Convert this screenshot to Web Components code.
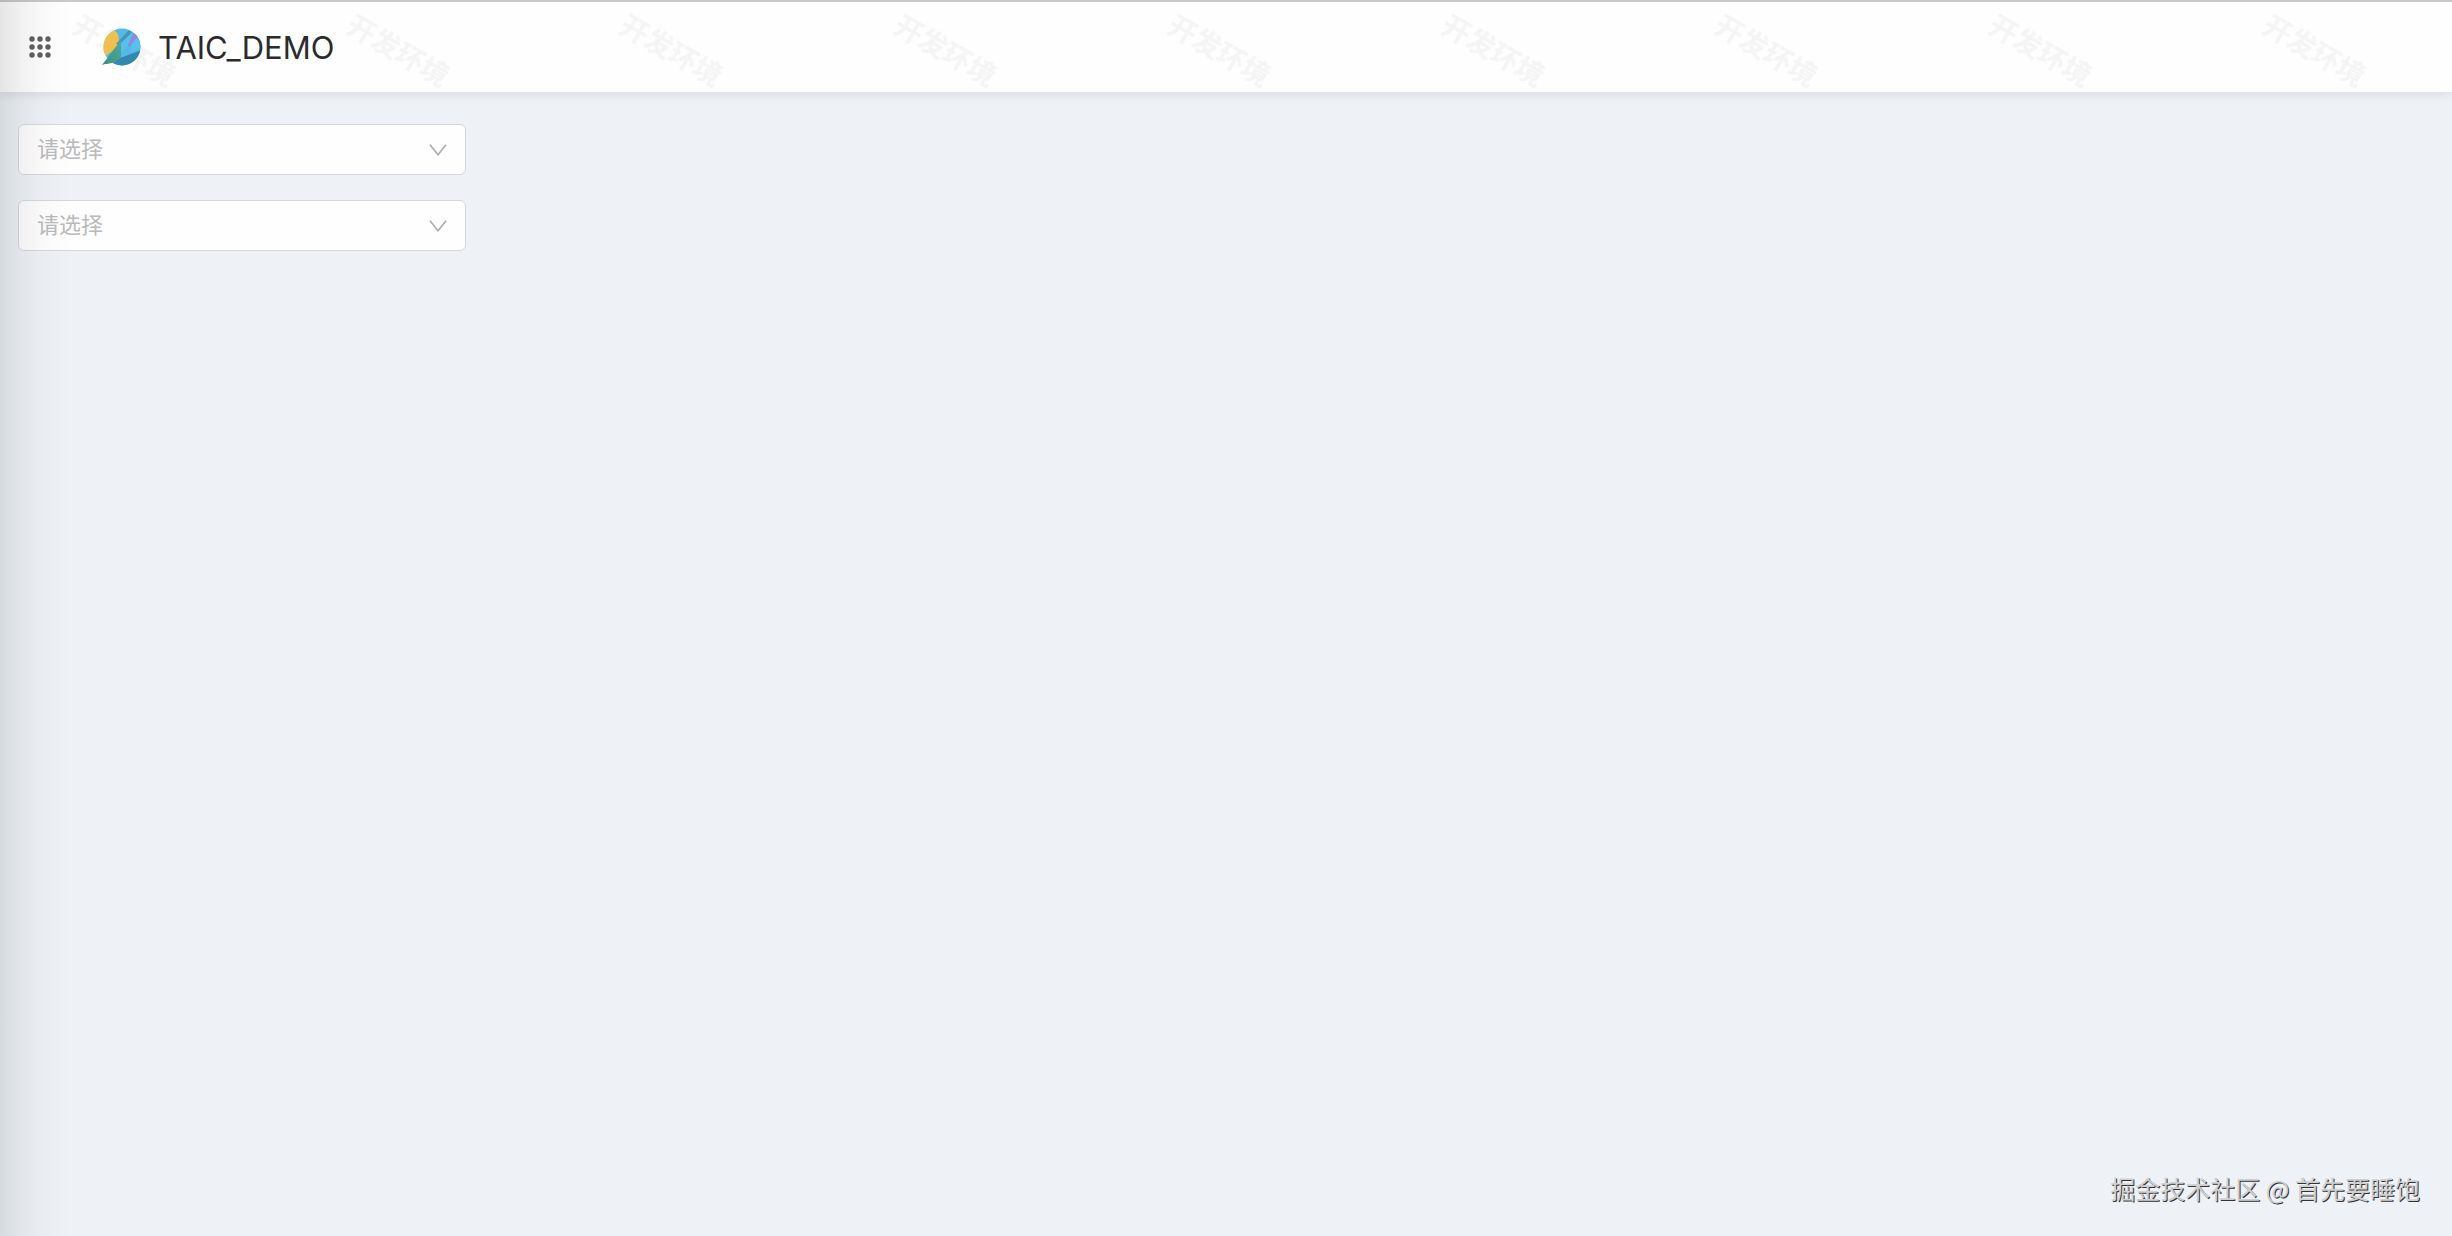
<!DOCTYPE html>
<html lang="zh-CN">
<head>
<meta charset="utf-8">
<title>TAIC_DEMO</title>
<style>
 body {
  margin: 0;
  background: #eef2f7;
  font-family: Inter, 'Noto Sans CJK SC', sans-serif;
 }
</style>
</head>
<body>
<app-shell>
 <app-header slot="header" title-text="TAIC_DEMO" watermark="开发环境"></app-header>
 <app-select label="选项一" placeholder="请选择"></app-select>
 <app-select label="选项二" placeholder="请选择"></app-select>
 <page-credit slot="footer">掘金技术社区 @ 首先要睡饱</page-credit>
</app-shell>

<script>
class AppShell extends HTMLElement {
 constructor() {
  super();
  this.attachShadow({ mode: 'open' });
 }

 connectedCallback() {
  this.shadowRoot.innerHTML = `
   <style>
   :host {
    display: flex;
    flex-direction: column;
    min-height: 100vh;
    position: relative;
   }

   main {
    flex: 1;
    display: flex;
    flex-direction: column;
    align-items: flex-start;
    gap: 25px;
    padding: 32px 18px;
   }

   /* soft shade along the left edge, above everything */
   .edge {
    position: absolute;
    inset: 0 auto 0 0;
    width: 72px;
    pointer-events: none;
    background: linear-gradient(to right, rgba(0, 10, 0, 0.1), rgba(0, 10, 0, 0.05) 30%, rgba(0, 10, 0, 0.02) 60%, transparent);
   }
   </style>
   <slot name="header"></slot>
   <main><slot></slot></main>
   <slot name="footer"></slot>
   <div class="edge"></div>
  `;
 }
}

class AppHeader extends HTMLElement {
 constructor() {
  super();
  this.attachShadow({ mode: 'open' });
 }

 connectedCallback() {
  this.render();
 }

 getDots() {
  let dots = '';
  for (let y = 0; y < 3; y++) {
   for (let x = 0; x < 3; x++) {
    dots += `<circle cx="${3 + x * 8}" cy="${3 + y * 8}" r="2.7"/>`;
   }
  }
  return dots;
 }

 render() {
  const mark = this.getAttribute('watermark') || '';

  this.shadowRoot.innerHTML = `
   <style>
   :host {
    display: block;
    position: relative;
    border-top: 2px solid #c9c9c9;
    background: #fefefe;
    box-shadow: 0 2px 10px rgba(0, 0, 0, 0.1);
   }

   header {
    position: relative;
    display: flex;
    align-items: center;
    height: 90px;
    padding: 0 29px;
   }

   button {
    display: flex;
    padding: 0;
    border: 0;
    background: none;
    color: #606060;
    cursor: pointer;
   }

   .logo {
    margin-left: 50px;
   }

   h1 {
    margin: 0 0 0 16px;
    padding-top: 2px;
    font-size: 31px;
    font-weight: 400;
    line-height: 40px;
    color: #2b2b2b;
   }

   /* tiled marks behind the bar content */
   .marks {
    position: absolute;
    inset: 0;
    display: flex;
    align-items: center;
    justify-content: space-between;
    padding: 4px 81px 0 69px;
   }

   .marks span {
    font: 700 28px/28px 'Noto Sans CJK SC', sans-serif;
    white-space: nowrap;
    color: #f5f5f5;
    transform: rotate(30deg);
    user-select: none;
   }
   </style>
   <div class="marks" aria-hidden="true">${`<span>${mark}</span>`.repeat(9)}</div>
   <header>
    <button type="button" aria-label="应用">
     <svg width="22" height="22" viewBox="0 0 22 22" fill="currentColor">${this.getDots()}</svg>
    </button>
    <svg class="logo" width="41" height="38" viewBox="0 0 41 38">
     <defs>
      <clipPath id="disc"><circle cx="21" cy="19" r="18.5"/></clipPath>
      <linearGradient id="sun" x1="0" y1="0" x2="1" y2="1">
       <stop offset="0" stop-color="#eec850"/>
       <stop offset="1" stop-color="#f3b84c"/>
      </linearGradient>
      <linearGradient id="leaf" x1="1" y1="0" x2="0" y2="1">
       <stop offset="0" stop-color="#4fa9a0"/>
       <stop offset="1" stop-color="#38917c"/>
      </linearGradient>
     </defs>
     <g clip-path="url(#disc)">
      <path fill="#55b9e6" d="M0 0h41v38H0z"/>
      <path fill="url(#sun)" d="M0 0h9c10 4 11 12 6 20L2 30z"/>
      <path fill="#4695bb" d="M15 16 28 2l3 2-11 13z"/>
      <path fill="#4a9fd0" d="M20 17 38 3l3 10-12 5z"/>
      <path fill="#57c0ec" d="M20 15 33 3l-6 15-7 6z"/>
      <path fill="#9b84dc" d="m27 18 6-14 4 4-5 8z"/>
      <path fill="#57c0ec" d="m30 17 7-9 4 11-11 5z"/>
      <path fill="#3187ae" d="M19 30l22-8v16H8z"/>
     </g>
     <path fill="url(#leaf)" d="M1 37 20 12v17c-5 5-10 7-16 7z"/>
    </svg>
    <h1></h1>
   </header>
  `;
  this.shadowRoot.querySelector('h1').textContent = this.getAttribute('title-text');
 }
}

class AppSelect extends HTMLElement {
 constructor() {
  super();
  this.attachShadow({ mode: 'open' });
 }

 connectedCallback() {
  const placeholder = this.getAttribute('placeholder') || '';

  this.shadowRoot.innerHTML = `
   <style>
   :host {
    display: grid;
    width: 448px;
    max-width: 100%;
   }

   select, svg {
    grid-area: 1 / 1;
   }

   select {
    appearance: none;
    box-sizing: border-box;
    width: 100%;
    height: 51px;
    padding: 0 48px 6px 18px;
    border: 1px solid #d5d8da;
    border-radius: 6px;
    background: #fefefe;
    color: #bababa;
    font: 400 22px/32px 'Noto Sans CJK SC', sans-serif;
   }

   svg {
    align-self: center;
    justify-self: end;
    margin-right: 19px;
    pointer-events: none;
   }
   </style>
   <select aria-label="${this.getAttribute('label')}">
    <option value="">${placeholder}</option>
   </select>
   <svg width="18" height="12" viewBox="0 0 18 12" fill="none" stroke="#adadad" stroke-width="1.7">
    <path d="m1 .7 8 10 8-10"/>
   </svg>
  `;
 }
}

class PageCredit extends HTMLElement {
 constructor() {
  super();
  this.attachShadow({ mode: 'open' });
 }

 connectedCallback() {
  this.shadowRoot.innerHTML = `
   <style>
   :host {
    display: block;
    padding: 0 32px 30px;
    text-align: right;
    font: 400 25px/36px 'Noto Sans CJK SC', sans-serif;
    color: #d0d0d0;
    text-shadow: 1px 1px 0 #333;
   }
   </style>
   <slot></slot>
  `;
 }
}

customElements.define('app-shell', AppShell);
customElements.define('app-header', AppHeader);
customElements.define('app-select', AppSelect);
customElements.define('page-credit', PageCredit);
</script>
</body>
</html>
